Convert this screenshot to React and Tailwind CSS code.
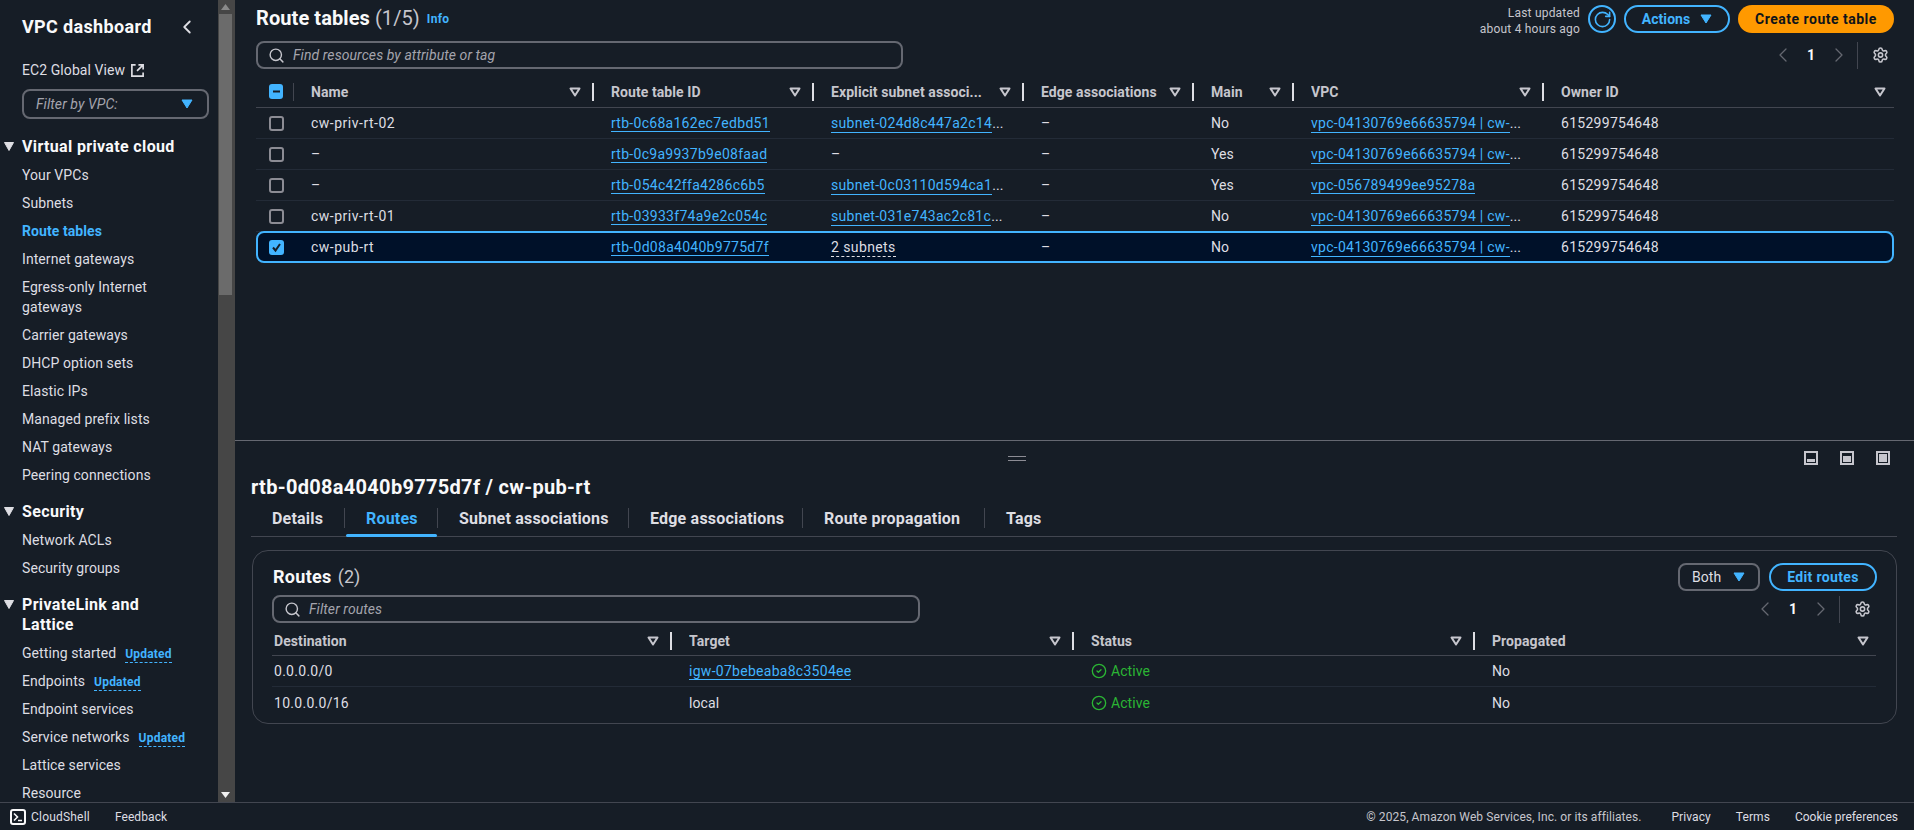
import React from "react";
import { Search, ChevronLeft, ChevronRight, Settings, RotateCw, CircleCheck } from "lucide-react";

const rows = [
  { name: "cw-priv-rt-02", id: "rtb-0c68a162ec7edbd51", sub: "subnet-024d8c447a2c14", main: "No", vpc: true },
  { name: "–", id: "rtb-0c9a9937b9e08faad", sub: null, main: "Yes", vpc: true },
  { name: "–", id: "rtb-054c42ffa4286c6b5", sub: "subnet-0c03110d594ca1", main: "Yes", vpc: false },
  { name: "cw-priv-rt-01", id: "rtb-03933f74a9e2c054c", sub: "subnet-031e743ac2c81c", main: "No", vpc: true },
];

function Tri({ className = "" }) {
  return (
    <svg width="16" height="16" viewBox="0 0 16 16" className={"shrink-0 " + className}>
      <path d="M3.5 4.5h9L8 11.5z" fill="none" stroke="#c6c6cd" strokeWidth="2" strokeLinejoin="round" />
    </svg>
  );
}

function Down({ color = "#42b4ff", className = "" }) {
  return (
    <svg width="12" height="10" viewBox="0 0 12 10" className={"shrink-0 " + className}>
      <path d="M1 1h10L6 9z" fill={color} stroke={color} strokeLinejoin="round" />
    </svg>
  );
}

function Box({ state }) {
  if (state === "none") {
    return <div className="w-[15px] h-[15px] rounded-[3px] border-2 border-[#8c8c94]" />;
  }
  return (
    <div className="w-[15px] h-[15px] rounded-[3px] bg-[#42b4ff] flex items-center justify-center">
      <svg width="11" height="11" viewBox="0 0 11 11">
        {state === "dash" ? (
          <path d="M2 5.5h7" stroke="#161d26" strokeWidth="2" />
        ) : (
          <path d="M2 5.5l2.5 3L9 2" stroke="#161d26" strokeWidth="2" fill="none" />
        )}
      </svg>
    </div>
  );
}

function Gear() {
  return <Settings size={18} strokeWidth={2.2} className="text-[#c6c6cd]" />;
}

function Pager() {
  return (
    <div className="flex items-center h-[28px]">
      <ChevronLeft size={24} strokeWidth={1.3} className="text-[#656871]" />
      <span className="w-[10px] ml-[11px] mr-[11px] text-center text-[14px] font-bold text-[#f9f9fa]">1</span>
      <ChevronRight size={24} strokeWidth={1.3} className="text-[#656871]" />
      <div className="w-px h-[27px] bg-[#424650] ml-[6px]" />
      <div className="w-[17px] ml-[14px] flex justify-center"><Gear /></div>
    </div>
  );
}

function Th({ w, pl = "pl-[17px]", last, children }) {
  return (
    <div className={"flex items-center shrink-0 " + w + " " + pl + (last ? " pr-[6px]" : "")}>
      <span className="flex-1 truncate font-bold text-[#c6c6cd]">{children}</span>
      <Tri />
      {!last && <div className="w-[2px] h-[18px] bg-[#dedee3] ml-[9px]" />}
    </div>
  );
}

function Ext({ label }) {
  return (
    <span className="flex items-center">
      <span className="inline-block whitespace-nowrap text-[#42b4ff] border-b border-[#42b4ff] leading-[18px] tracking-[0.28px]">{label}</span>
      <span className="text-[#dedee3]">...</span>
    </span>
  );
}

function Link({ children }) {
  return <span className="whitespace-nowrap text-[#42b4ff] border-b border-[#42b4ff] leading-[18px] tracking-[0.28px]">{children}</span>;
}

const Vpc = ({ has }) =>
  has ? <Ext label="vpc-04130769e66635794 | cw-" /> : <Link>vpc-056789499ee95278a</Link>;

function Row({ r, selected, check }) {
  return (
    <div
      className={
        "flex items-center text-[#dedee3] " +
        (selected
          ? "h-[32px] -mt-px bg-[#001129] border-2 border-[#42b4ff] rounded-[8px] relative"
          : "h-[31px] border-b border-[#232b37]")
      }
    >
      <div className={"shrink-0 " + (selected ? "w-[36px] pl-[11px]" : "w-[38px] pl-[13px]")}><Box state={check} /></div>
      <div className="w-[300px] shrink-0 pl-[17px] tracking-[0.5px]">{r.name}</div>
      <div className="w-[220px] shrink-0 pl-[17px]"><Link>{r.id}</Link></div>
      <div className="w-[210px] shrink-0 pl-[17px]">
        {selected ? (
          <span className="border-b border-dashed border-[#dedee3] leading-[18px] inline-block tracking-[0.4px]">2 subnets</span>
        ) : r.sub ? (
          <Ext label={r.sub} />
        ) : "–"}
      </div>
      <div className="w-[170px] shrink-0 pl-[17px]">–</div>
      <div className="w-[100px] shrink-0 pl-[17px]">{r.main}</div>
      <div className="w-[250px] shrink-0 pl-[17px]"><Vpc has={r.vpc} /></div>
      <div className="pl-[17px] tracking-[0.28px]">615299754648</div>
    </div>
  );
}

function NavItem({ children, active, badge }) {
  return (
    <div className={"leading-[20px] flex items-center " + (active ? "font-bold text-[#42b4ff]" : "text-[#dedee3]")}>
      <span>{children}</span>
      {badge && (
        <span className="ml-[9px] text-[12px] font-bold tracking-[0.2px] text-[#42b4ff] border-b border-dashed border-[#42b4ff] leading-[15px] mt-[3px]">Updated</span>
      )}
    </div>
  );
}

function Section({ children }) {
  return (
    <div className="relative text-[16px] font-bold leading-[20px] tracking-[0.35px] text-[#f9f9fa]">
      <svg width="10" height="9" viewBox="0 0 10 9" className="absolute left-[-18px] top-[5px]">
        <path d="M0.5 0.5h9L5 8.5z" fill="#dedee3" stroke="#dedee3" strokeLinejoin="round" />
      </svg>
      {children}
    </div>
  );
}

function Sidebar() {
  return (
    <div className="w-[218px] shrink-0 h-full overflow-hidden pl-[22px] pr-[9px] pt-[16px]">
      <div className="flex items-center justify-between h-[22px]">
        <span className="text-[18px] font-bold tracking-[0.35px] text-[#f9f9fa]">VPC dashboard</span>
        <ChevronLeft size={22} strokeWidth={2} className="text-[#dedee3] mr-[11px]" />
      </div>
      <div className="mt-[22px] flex items-center leading-[20px] text-[#dedee3]">
        <span>EC2 Global View</span>
        <svg width="15" height="15" viewBox="0 0 16 16" className="ml-[5px]">
          <path d="M6 2H2v12h12v-4M9 2h5v5M14 2L7.5 8.5" fill="none" stroke="#dedee3" strokeWidth="1.8" />
        </svg>
      </div>
      <div className="mt-[9px] h-[30px] w-[187px] border-2 border-[#656871] rounded-[8px] flex items-center justify-between pl-[12px] pr-[14px]">
        <span className="italic text-[#a4a4ad]">Filter by VPC:</span>
        <Down />
      </div>
      <div className="mt-[18px]"><Section>Virtual private cloud</Section></div>
      <div className="mt-[8px] flex flex-col gap-[8px]">
        <NavItem>Your VPCs</NavItem>
        <NavItem>Subnets</NavItem>
        <NavItem active>Route tables</NavItem>
        <NavItem>Internet gateways</NavItem>
        <NavItem>Egress-only Internet<br />gateways</NavItem>
        <NavItem>Carrier gateways</NavItem>
        <NavItem>DHCP option sets</NavItem>
        <NavItem>Elastic IPs</NavItem>
        <NavItem>Managed prefix lists</NavItem>
        <NavItem>NAT gateways</NavItem>
        <NavItem>Peering connections</NavItem>
      </div>
      <div className="mt-[17px]"><Section>Security</Section></div>
      <div className="mt-[8px] flex flex-col gap-[8px]">
        <NavItem>Network ACLs</NavItem>
        <NavItem>Security groups</NavItem>
      </div>
      <div className="mt-[17px]"><Section>PrivateLink and<br />Lattice</Section></div>
      <div className="mt-[8px] flex flex-col gap-[8px]">
        <NavItem badge>Getting started</NavItem>
        <NavItem badge>Endpoints</NavItem>
        <NavItem>Endpoint services</NavItem>
        <NavItem badge>Service networks</NavItem>
        <NavItem>Lattice services</NavItem>
        <NavItem>Resource</NavItem>
      </div>
    </div>
  );
}

function Scrollbar() {
  return (
    <div className="w-[17px] shrink-0 h-full bg-[#464646] flex flex-col items-start pl-[1px]">
      <div className="w-[13px] h-[14px] flex items-center justify-center">
        <svg width="9" height="6" viewBox="0 0 9 6"><path d="M4.5 0L9 6H0z" fill="#8a8a8a" /></svg>
      </div>
      <div className="w-[13px] h-[281px] bg-[#6b6b6b]" />
      <div className="flex-1" />
      <div className="w-[13px] h-[14px] flex items-center justify-center">
        <svg width="9" height="6" viewBox="0 0 9 6"><path d="M0 0h9L4.5 6z" fill="#f0f0f0" /></svg>
      </div>
    </div>
  );
}

function TopPanel() {
  return (
    <div className="h-[441px] shrink-0 border-b border-[#656871] pl-[21px] pr-[20px]">
      <div className="flex h-[41px] pt-[5px]">
        <div className="flex-1 flex items-start -mt-[5px] pt-[4px]">
          <span className="text-[20px] leading-[28px] font-bold text-[#f9f9fa]">Route tables</span>
          <span className="text-[20px] leading-[28px] text-[#c6c6cd] ml-[5px]">(1/5)</span>
          <span className="text-[12px] font-bold tracking-[0.3px] text-[#42b4ff] ml-[7px] mt-[7px] leading-[16px]">Info</span>
        </div>
        <div className="flex items-start">
          <div className="text-right text-[12px] leading-[16px] tracking-[0.2px] text-[#c6c6cd] mr-[8px]">Last updated<br />about 4 hours ago</div>
          <div className="w-[28px] h-[28px] rounded-full border-2 border-[#42b4ff] flex items-center justify-center text-[#42b4ff]">
            <RotateCw size={19} strokeWidth={2} />
          </div>
          <div className="ml-[8px] w-[106px] h-[28px] rounded-full border-2 border-[#42b4ff] flex items-center justify-center gap-[10px] text-[#42b4ff] font-bold">
            Actions <Down />
          </div>
          <div className="ml-[8px] w-[156px] h-[28px] rounded-full bg-[#ff9900] flex items-center justify-center text-[#0f141a] font-bold tracking-[0.5px]">
            Create route table
          </div>
        </div>
      </div>
      <div className="flex items-center justify-between h-[28px]">
        <div className="w-[647px] h-[28px] border-2 border-[#656871] rounded-[8px] flex items-center pl-[10px]">
          <Search size={17} strokeWidth={2} className="text-[#c6c6cd]" />
          <span className="ml-[8px] italic text-[#a4a4ad]">Find resources by attribute or tag</span>
        </div>
        <div className="mr-[5px]"><Pager /></div>
      </div>
      <div className="mt-[7px] flex items-center h-[32px] border-b border-[#424650]">
        <div className="w-[38px] shrink-0 flex items-center pl-[13px]">
          <Box state="dash" />
          <div className="w-px h-[18px] bg-[#424650] ml-[10px]" />
        </div>
        <Th w="w-[300px]">Name</Th>
        <Th w="w-[220px]">Route table ID</Th>
        <Th w="w-[210px]">Explicit subnet associ...</Th>
        <Th w="w-[170px]">Edge associations</Th>
        <Th w="w-[100px]">Main</Th>
        <Th w="w-[250px]">VPC</Th>
        <Th w="w-[350px]" last>Owner ID</Th>
      </div>
      {rows.map((r) => <Row key={r.id} r={r} check="none" />)}
      <Row selected check="check" r={{ name: "cw-pub-rt", id: "rtb-0d08a4040b9775d7f", main: "No", vpc: true }} />
    </div>
  );
}

const tabs = [
  ["Details", "w-[94px]"],
  ["Routes", "w-[93px]"],
  ["Subnet associations", "w-[191px]"],
  ["Edge associations", "w-[174px]"],
  ["Route propagation", "w-[182px]"],
  ["Tags", "w-[80px]"],
];

function SplitIcon({ h }) {
  return (
    <div className="w-[14px] h-[14px] border-2 border-[#c6c6cd] flex items-end p-[1px]">
      <div className={"w-full bg-[#c6c6cd] " + h} />
    </div>
  );
}

function RouteRow({ dest, target, link, last }) {
  return (
    <div className={"flex items-center h-[31px] text-[#dedee3] " + (last ? "" : "border-b border-[#232b37]")}>
      <div className="w-[400px] shrink-0 pl-[2px] tracking-[0.28px]">{dest}</div>
      <div className="w-[402px] shrink-0 pl-[17px]">{link ? <Link>{target}</Link> : target}</div>
      <div className="w-[401px] shrink-0 pl-[17px] flex items-center text-[#2bb534]">
        <CircleCheck size={16} strokeWidth={2} />
        <span className="ml-[4px]">Active</span>
      </div>
      <div className="pl-[17px]">No</div>
    </div>
  );
}

function BottomPanel() {
  return (
    <div className="flex-1 min-h-0 pl-[16px] pr-[17px]">
      <div className="h-[34px] flex items-center">
        <div className="ml-[757px] w-[18px] h-[5px] border-y border-[#8c8c94]" />
        <div className="flex-1" />
        <div className="flex items-center gap-[22px] mr-[7px]">
          <SplitIcon h="h-[3px]" />
          <SplitIcon h="h-[6px]" />
          <SplitIcon h="h-full" />
        </div>
      </div>
      <div className="mt-[1px] text-[20px] font-bold leading-[22px] tracking-[0.3px] text-[#f9f9fa]">rtb-0d08a4040b9775d7f / cw-pub-rt</div>
      <div className="mt-[6px] h-[33px] border-b border-[#424650] flex">
        {tabs.map(([t, w], i) => (
          <div key={t} className={"relative h-[33px] flex items-center pl-[21px] pb-[4px] shrink-0 " + w}>
            <span className={"text-[16px] font-bold tracking-[0.2px] whitespace-nowrap " + (i === 1 ? "text-[#42b4ff]" : "text-[#dedee3]")}>{t}</span>
            {i < 5 && <div className="absolute right-0 top-[4px] w-px h-[20px] bg-[#424650]" />}
            {i === 1 && <div className="absolute left-px right-px bottom-0 h-[3px] rounded-full bg-[#42b4ff]" />}
          </div>
        ))}
      </div>
      <div className="mt-[13px] ml-px h-[174px] border border-[#424650] rounded-[16px] pl-[19px] pr-[20px]">
        <div className="flex items-start h-[44px] pt-[12px]">
          <span className="pl-px text-[18px] leading-[28px] font-bold tracking-[0.3px] text-[#f9f9fa]">Routes</span>
          <span className="text-[18px] leading-[28px] text-[#c6c6cd] ml-[6px]">(2)</span>
          <div className="flex-1" />
          <div className="w-[82px] h-[28px] border-2 border-[#656871] rounded-[8px] flex items-center pl-[12px] gap-[12px] text-[#dedee3]">
            Both <Down />
          </div>
          <div className="ml-[9px] -mr-px w-[108px] h-[28px] border-2 border-[#42b4ff] rounded-full flex items-center justify-center font-bold tracking-[0.35px] text-[#42b4ff]">Edit routes</div>
        </div>
        <div className="flex items-center justify-between h-[28px]">
          <div className="w-[648px] h-[28px] border-2 border-[#656871] rounded-[8px] flex items-center pl-[10px]">
            <Search size={17} strokeWidth={2} className="text-[#c6c6cd]" />
            <span className="ml-[8px] italic text-[#a4a4ad]">Filter routes</span>
          </div>
          <div className="mr-[5px]"><Pager /></div>
        </div>
        <div className="flex items-center h-[33px] pt-[3px] border-b border-[#424650]">
          <Th w="w-[400px]" pl="pl-[2px]">Destination</Th>
          <Th w="w-[402px]">Target</Th>
          <Th w="w-[401px]">Status</Th>
          <Th w="w-[402px]" last>Propagated</Th>
        </div>
        <RouteRow dest="0.0.0.0/0" target="igw-07bebeaba8c3504ee" link />
        <RouteRow dest="10.0.0.0/16" target="local" last />
      </div>
    </div>
  );
}

function Footer() {
  return (
    <div className="h-[28px] shrink-0 border-t border-[#424650] flex items-center text-[12px] text-[#dedee3] pl-[10px] pr-[16px]">
      <div className="w-[16px] h-[16px] border-2 border-[#f9f9fa] rounded-[3px] flex items-center justify-center">
        <svg width="10" height="10" viewBox="0 0 10 10">
          <path d="M1 1.5L4.5 5 1 8.5M5 8.5h4" fill="none" stroke="#f9f9fa" strokeWidth="1.6" />
        </svg>
      </div>
      <span className="ml-[5px] tracking-[0.2px]">CloudShell</span>
      <span className="ml-[25px]">Feedback</span>
      <div className="flex-1" />
      <span className="text-[#c6c6cd]">© 2025, Amazon Web Services, Inc. or its affiliates.</span>
      <span className="ml-[30px]">Privacy</span>
      <span className="ml-[25px]">Terms</span>
      <span className="ml-[25px] tracking-normal">Cookie preferences</span>
    </div>
  );
}

export default function App() {
  return (
    <div className="w-[1914px] h-[830px] overflow-hidden flex flex-col bg-[#161d26] text-[14px] leading-[20px] tracking-[0.08px] font-['Roboto',sans-serif]">
      <div className="flex-1 min-h-0 flex">
        <Sidebar />
        <Scrollbar />
        <div className="flex-1 min-w-0 flex flex-col">
          <TopPanel />
          <BottomPanel />
        </div>
      </div>
      <Footer />
    </div>
  );
}
